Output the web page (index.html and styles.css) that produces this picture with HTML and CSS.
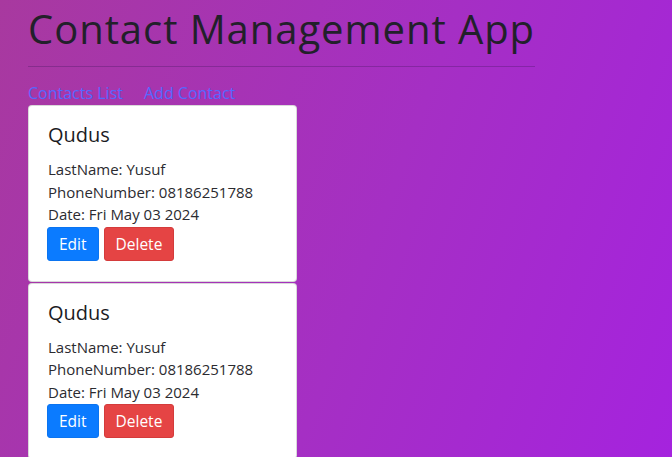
FILE: index.html
```html
<!DOCTYPE html>
<html lang="en">
<head>
<meta charset="utf-8">
<title>Contact Management App</title>
<link rel="stylesheet" href="styles.css">
</head>
<body>
<div class="app">
  <header class="header">
    <h1 class="title">Contact Management App</h1>
    <hr class="rule">
  </header>
  <nav class="nav">
    <a class="nav-link" href="#">Contacts List</a>
    <a class="nav-link" href="#">Add Contact</a>
  </nav>
  <div class="list">
    <div class="card">
      <h5 class="card-title">Qudus</h5>
      <p class="line">LastName: Yusuf</p>
      <p class="line">PhoneNumber: 08186251788</p>
      <p class="line">Date: Fri May 03 2024</p>
      <div class="actions">
        <button class="btn btn-edit">Edit</button>
        <button class="btn btn-delete">Delete</button>
      </div>
    </div>
    <div class="card">
      <h5 class="card-title">Qudus</h5>
      <p class="line">LastName: Yusuf</p>
      <p class="line">PhoneNumber: 08186251788</p>
      <p class="line">Date: Fri May 03 2024</p>
      <div class="actions">
        <button class="btn btn-edit">Edit</button>
        <button class="btn btn-delete">Delete</button>
      </div>
    </div>
  </div>
</div>
</body>
</html>
```
FILE: styles.css
```css
html, body {
  margin: 0;
  padding: 0;
  height: 100%;
}
body {
  font-family: "Open Sans", "Noto Sans", sans-serif;
  color: #212529;
  background: linear-gradient(110deg, #a8399f 0%, #a52fc4 55%, #a523de 100%);
  overflow: hidden;
}
.app {
  padding: 0 0 0 28px;
}
.header {
  width: fit-content;
}
.title {
  margin: 5px 0 0 0;
  font-size: 40px;
  font-weight: 400;
  line-height: 48px;
  letter-spacing: 0.95px;
  color: #22202a;
}
.rule {
  margin: 13px 0 0 0;
  border: 0;
  border-top: 1px solid rgba(60, 20, 90, 0.3);
  height: 0;
}
.nav {
  display: flex;
  gap: 21px;
  margin-top: 14px;
  height: 24px;
  align-items: center;
}
.nav-link {
  color: #5468ff;
  text-decoration: none;
  font-size: 16px;
  line-height: 24px;
}
.list {
  display: flex;
  flex-direction: column;
  gap: 1px;
  width: 269px;
}
.card {
  background: #fff;
  border: 1px solid rgba(0, 0, 0, 0.15);
  border-radius: 4px;
  padding: 17px 19px 20px 19px;
}
.card-title {
  margin: 0 0 11px 0;
  font-size: 20px;
  font-weight: 400;
  line-height: 24px;
  color: #1c1c1f;
}
.line {
  margin: 0;
  font-size: 15px;
  line-height: 22.5px;
  color: #2b2b30;
}
.actions {
  display: flex;
  gap: 5px;
  margin-top: 1px;
  margin-left: -1px;
}
.btn {
  font-family: inherit;
  font-size: 15.5px;
  line-height: 22px;
  color: #fff;
  border: 1px solid transparent;
  border-radius: 3px;
  height: 34px;
  padding: 0 11px;
  cursor: pointer;
}
.btn-edit {
  background: #0b7bff;
  border-color: #0b74f0;
}
.btn-delete {
  background: #e54444;
  border-color: #d43b3b;
}
```
